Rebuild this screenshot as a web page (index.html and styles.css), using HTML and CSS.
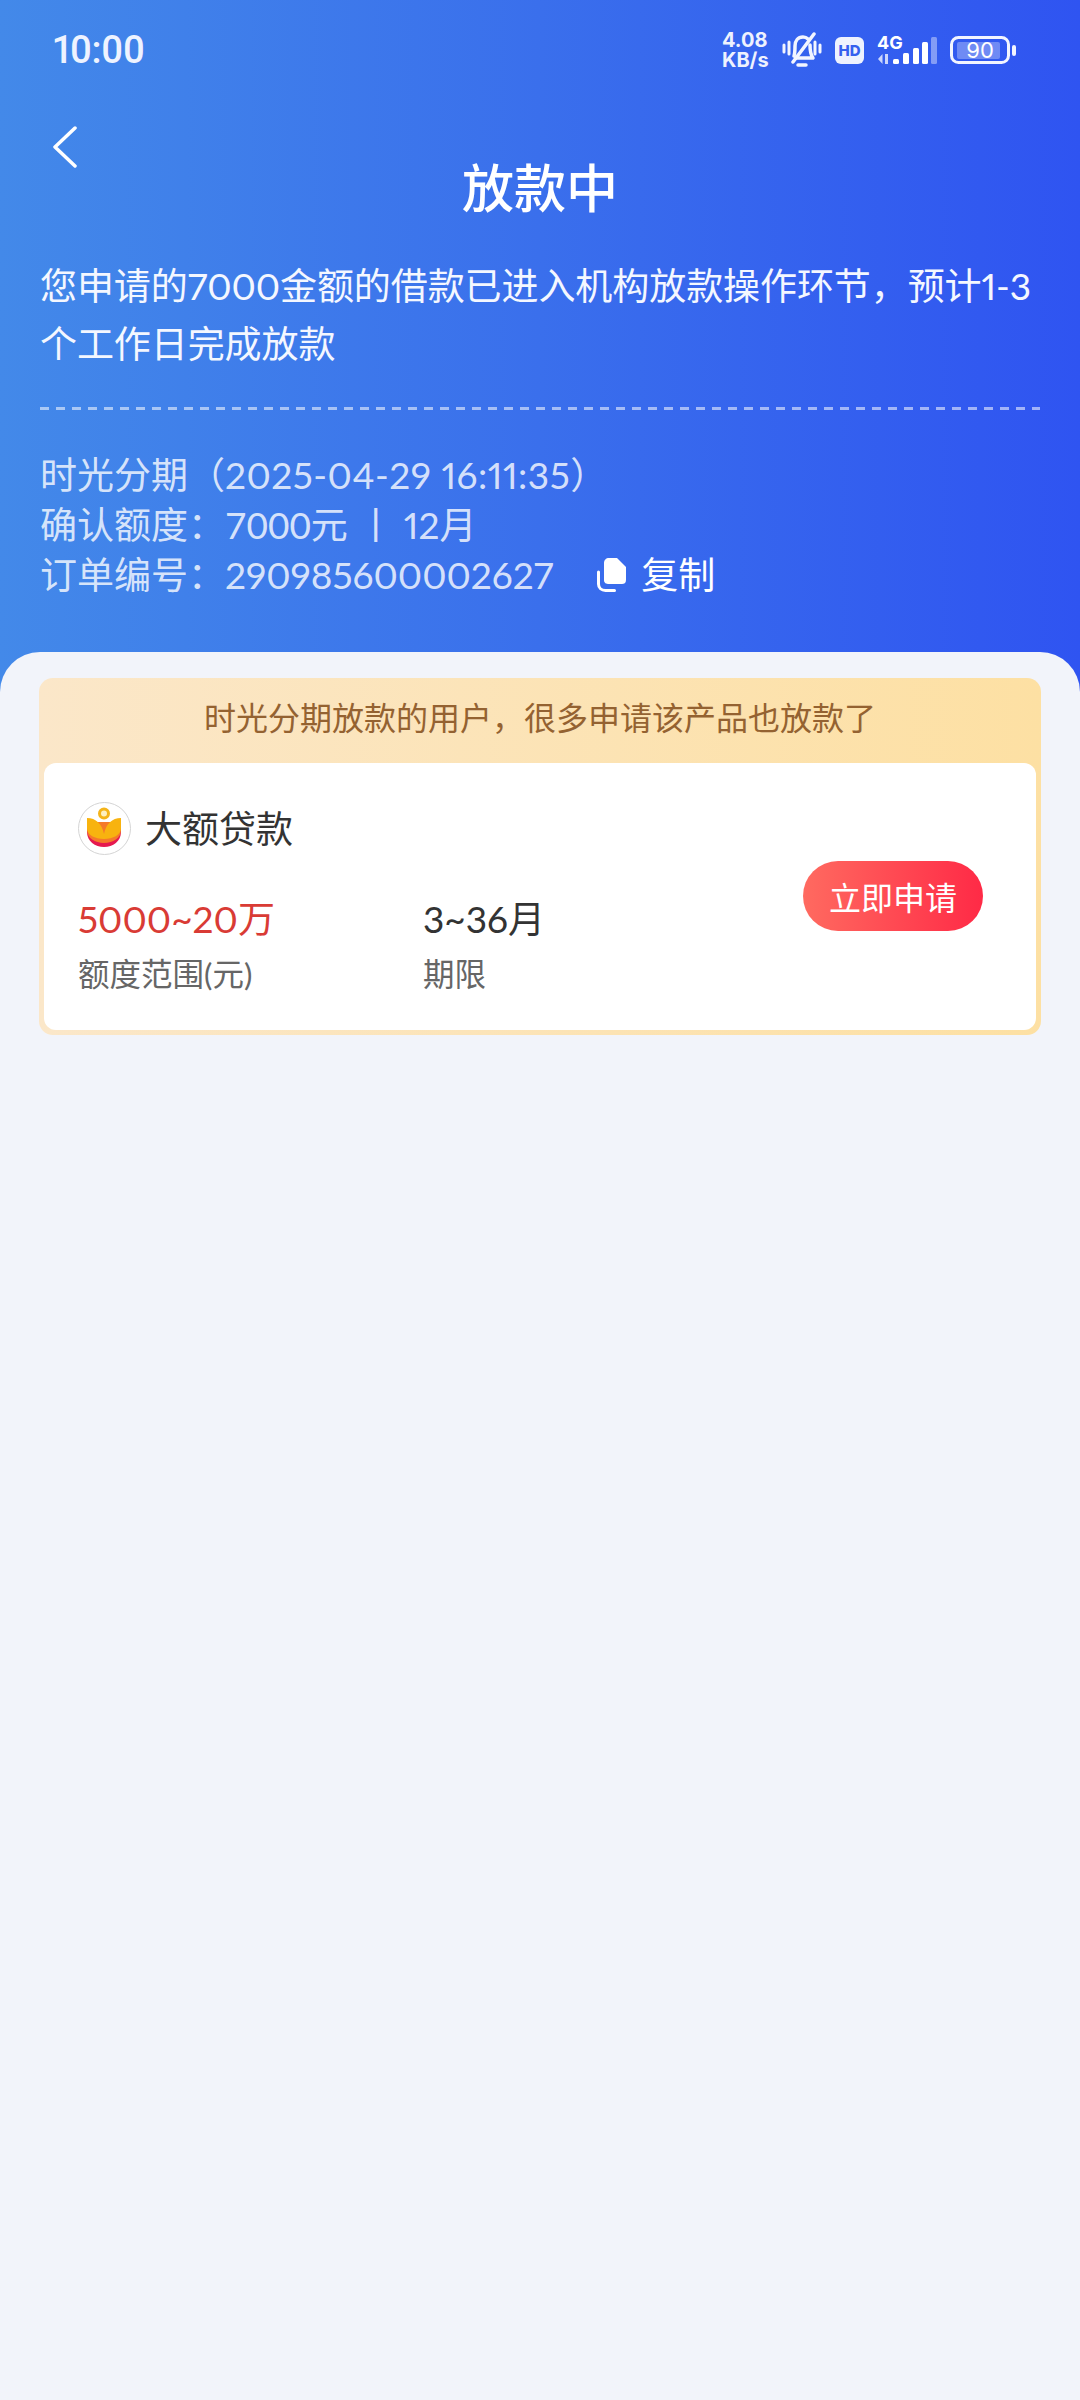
FILE: index.html
```html
<!DOCTYPE html>
<html lang="zh-CN">
  <head>
    <meta charset="UTF-8" />
    <meta name="viewport" content="width=device-width, initial-scale=1.0" />
    <link rel="stylesheet" href="styles.css">
    <title>放款中</title>
  </head>
  <body>
    <header class="header">
      <div class="status-bar">
        <span class="time">10:00</span>
        <div class="status-icons">
          <div class="speed"><span>4.08</span><span>KB/s</span></div>
          <svg class="bell" width="40" height="36" viewBox="0 0 40 36" fill="none" stroke="#f2f5ff" stroke-width="3.500" stroke-linecap="round" stroke-linejoin="round">
            <path d="M2 13v7M7 10v12M33 10v12M38 13v7" stroke-width="3" />
            <path d="M12 24c1-3 1-6 1-10 0-5 3-9 8-9 2 0 4 1 5 2M28 13c0 5 0 9 3 13H14" />
            <path d="M32 2 11 30" />
            <path d="M16 33h8" />
          </svg>
          <svg class="hd" width="29" height="27" viewBox="0 0 29 27">
            <rect width="29" height="27" rx="6" fill="#eef2fe" />
            <text x="14.500" y="19" text-anchor="middle" class="hd-text">HD</text>
          </svg>
          <svg class="signal" width="60" height="42" viewBox="0 -6 60 42">
            <text x="0" y="14" class="net-text">4G</text>
            <path d="M5.500 19v10L1 24zM8 19h3v10H8z" fill="#fff" opacity="0.75" />
            <rect x="16" y="24" width="6" height="5" rx="1.500" fill="#fff" />
            <rect x="26" y="18" width="6" height="11" rx="1.500" fill="#fff" />
            <rect x="36" y="13" width="6" height="16" rx="1.500" fill="#fff" />
            <rect x="45" y="7" width="6" height="22" rx="1.500" fill="#fff" />
            <rect x="54" y="2" width="6" height="27" rx="1.500" fill="#fff" opacity="0.4" />
          </svg>
          <svg class="battery" width="66" height="28" viewBox="0 0 66 28">
            <rect x="1.500" y="1.500" width="57" height="25" rx="7" fill="none" stroke="#f2f5ff" stroke-width="3" />
            <rect x="7" y="6" width="43" height="17" rx="2" fill="#fff" opacity="0.3" />
            <rect x="62" y="9" width="4" height="11" rx="2" fill="#f2f5ff" />
            <text x="30" y="22" text-anchor="middle" class="battery-text">90</text>
          </svg>
        </div>
      </div>

      <div class="back">
        <svg width="24" height="42" viewBox="0 0 24 42" fill="none" stroke="#fff" stroke-width="3.500" stroke-linecap="round" stroke-linejoin="round">
          <path d="M22 2 2 21l20 19" />
        </svg>
      </div>
      <h1 class="title">放款中</h1>
      <p class="desc">您申请的7000金额的借款已进入机构放款操作环节，预计1-3个工作日完成放款</p>
      <div class="divider"></div>
      <ul class="meta">
        <li>时光分期（<span class="date">2025-04-29 16:11:35</span>）</li>
        <li>确认额度：<span class="tabular">7000</span>元 丨 12月</li>
        <li class="order">
          <span>订单编号：290985600002627</span>
          <span class="copy">
            <svg width="30" height="36" viewBox="0 0 30 36">
              <path d="M1.500 15v12c0 4 3 6.500 7 6.500h9" fill="none" stroke="#fff" stroke-width="3" stroke-linecap="round" />
              <path d="M12 1h8l9 9v13c0 3-2 4-4 4H12c-3 0-5-1-5-4V6c0-3 2-5 5-5z" fill="#fff" />
            </svg>
            复制
          </span>
        </li>
      </ul>
    </header>

    <main class="sheet">
      <section class="offer">
        <div class="offer-banner">时光分期放款的用户，很多申请该产品也放款了</div>
        <div class="offer-card">
          <div class="offer-head">
            <svg class="logo" width="53" height="53" viewBox="0 0 53 53">
              <circle cx="26.500" cy="26.500" r="26" fill="#fff" stroke="#d4d4d4" />
              <circle cx="26" cy="11.500" r="4.500" fill="#fdf0c0" stroke="#f4b41a" stroke-width="3" />
              <path d="M9 24v6c0 9 8 15 17 15s17-6 17-15v-6z" fill="#e6194f" />
              <path d="M9 20v8c0 8 8 13 17 13s17-5 17-13v-8z" fill="#f57a2a" />
              <path d="M9 16c9 0 15 6 17 16 2-10 8-16 17-16v10c0 7-8 11-17 11S9 33 9 26z" fill="#f8b30f" />
            </svg>
            <span class="offer-name">大额贷款</span>
          </div>
          <div class="offer-body">
            <div class="stat stat-amount">
              <div class="stat-value red">5000~20万</div>
              <div class="stat-label">额度范围(元)</div>
            </div>
            <div class="stat">
              <div class="stat-value">3~36月</div>
              <div class="stat-label">期限</div>
            </div>
            <button class="apply">立即申请</button>
          </div>
        </div>
      </section>
    </main>
  </body>
</html>
```

FILE: styles.css
```css
* {
  box-sizing: border-box;
}

body {
  margin: 0;
  min-height: 2400px;
  display: flex;
  flex-direction: column;
  background: #f2f4fa;
  font-family: Lato, "Noto Sans CJK SC", sans-serif;
  font-variant-numeric: proportional-nums;
}

.header {
  padding: 0 40px 92px;
  background: linear-gradient(90deg, #4389e9 0%, #3a6fec 50%, #2f54f1 100%);
  color: #fff;
}

.status-bar {
  height: 100px;
  margin: 0 24px 0 13px;
  display: flex;
  align-items: center;
  justify-content: space-between;
}

.time {
  font-family: Roboto, sans-serif;
  font-size: 38px;
  font-weight: 500;
  letter-spacing: -0.6px;
  color: #eef3ff;
}

.status-icons {
  display: flex;
  align-items: center;
}

.speed {
  display: flex;
  flex-direction: column;
  width: 48px;
  margin-right: 12px;
  font-family: Inter, sans-serif;
  font-size: 20px;
  font-weight: 700;
  line-height: 20px;
  color: #eef2fe;
}

.bell {
  margin-right: 13px;
}

.hd {
  margin-right: 13px;
}

.hd-text {
  font: 800 15px Inter, sans-serif;
  fill: #3560ee;
}

.signal {
  margin-right: 13px;
}

.net-text {
  font: 700 18px Inter, sans-serif;
  fill: #fff;
}

.battery-text {
  font: 400 22px Inter, sans-serif;
  fill: #fff;
}

.back {
  height: 32px;
  margin: 26px 0 0 13px;
}

.title {
  margin: 0;
  font-size: 52px;
  font-weight: 500;
  line-height: 60px;
  text-align: center;
}

.desc {
  margin: 39px 0 0;
  font-size: 37px;
  letter-spacing: -0.08px;
  line-height: 58px;
  color: #f4f7ff;
}

.divider {
  height: 3px;
  margin-top: 34px;
  background: repeating-linear-gradient(90deg, rgba(255, 255, 255, 0.55) 0 9px, transparent 9px 16px);
}

.meta {
  list-style: none;
  margin: 40px 0 0;
  padding: 0;
  font-size: 37px;
  line-height: 50px;
  color: rgba(255, 255, 255, 0.8);
}

.date {
  letter-spacing: 0.5px;
}

.tabular {
  font-variant-numeric: tabular-nums;
}

.order {
  display: flex;
  align-items: center;
}

.copy {
  display: flex;
  align-items: center;
  gap: 14px;
  margin-left: 44px;
  color: #fff;
}

.sheet {
  flex: 1;
  margin-top: -40px;
  padding: 26px 39px 0;
  background: #f2f4fa;
  border-radius: 40px 40px 0 0;
}

.offer {
  padding: 0 5px 5px;
  background: linear-gradient(90deg, #fbe7c9 0%, #fde0a3 100%);
  border-radius: 14px;
}

.offer-banner {
  height: 85px;
  font-size: 32px;
  line-height: 79px;
  text-align: center;
  color: #946231;
}

.offer-card {
  height: 267px;
  padding: 39px 53px 0 34px;
  background: #fff;
  border-radius: 12px;
}

.offer-head {
  display: flex;
  align-items: center;
  gap: 14px;
  height: 53px;
}

.offer-name {
  font-size: 37px;
  line-height: 50px;
  color: #333;
}

.offer-body {
  display: flex;
  margin-top: 6px;
}

.stat {
  padding-top: 36px;
}

.stat-amount {
  width: 345px;
}

.stat-value {
  font-size: 37px;
  line-height: 44px;
  color: #333;
}

.stat-value.red {
  color: #d93b35;
}

.stat-label {
  margin-top: 11px;
  font-size: 31.500px;
  line-height: 44px;
  color: #666;
}

.apply {
  width: 180px;
  height: 70px;
  margin-left: auto;
  padding: 0;
  border: 0;
  border-radius: 35px;
  background: linear-gradient(90deg, #ff6a60 0%, #ff2a46 100%);
  font-family: inherit;
  font-size: 32px;
  color: #fff;
}
```
